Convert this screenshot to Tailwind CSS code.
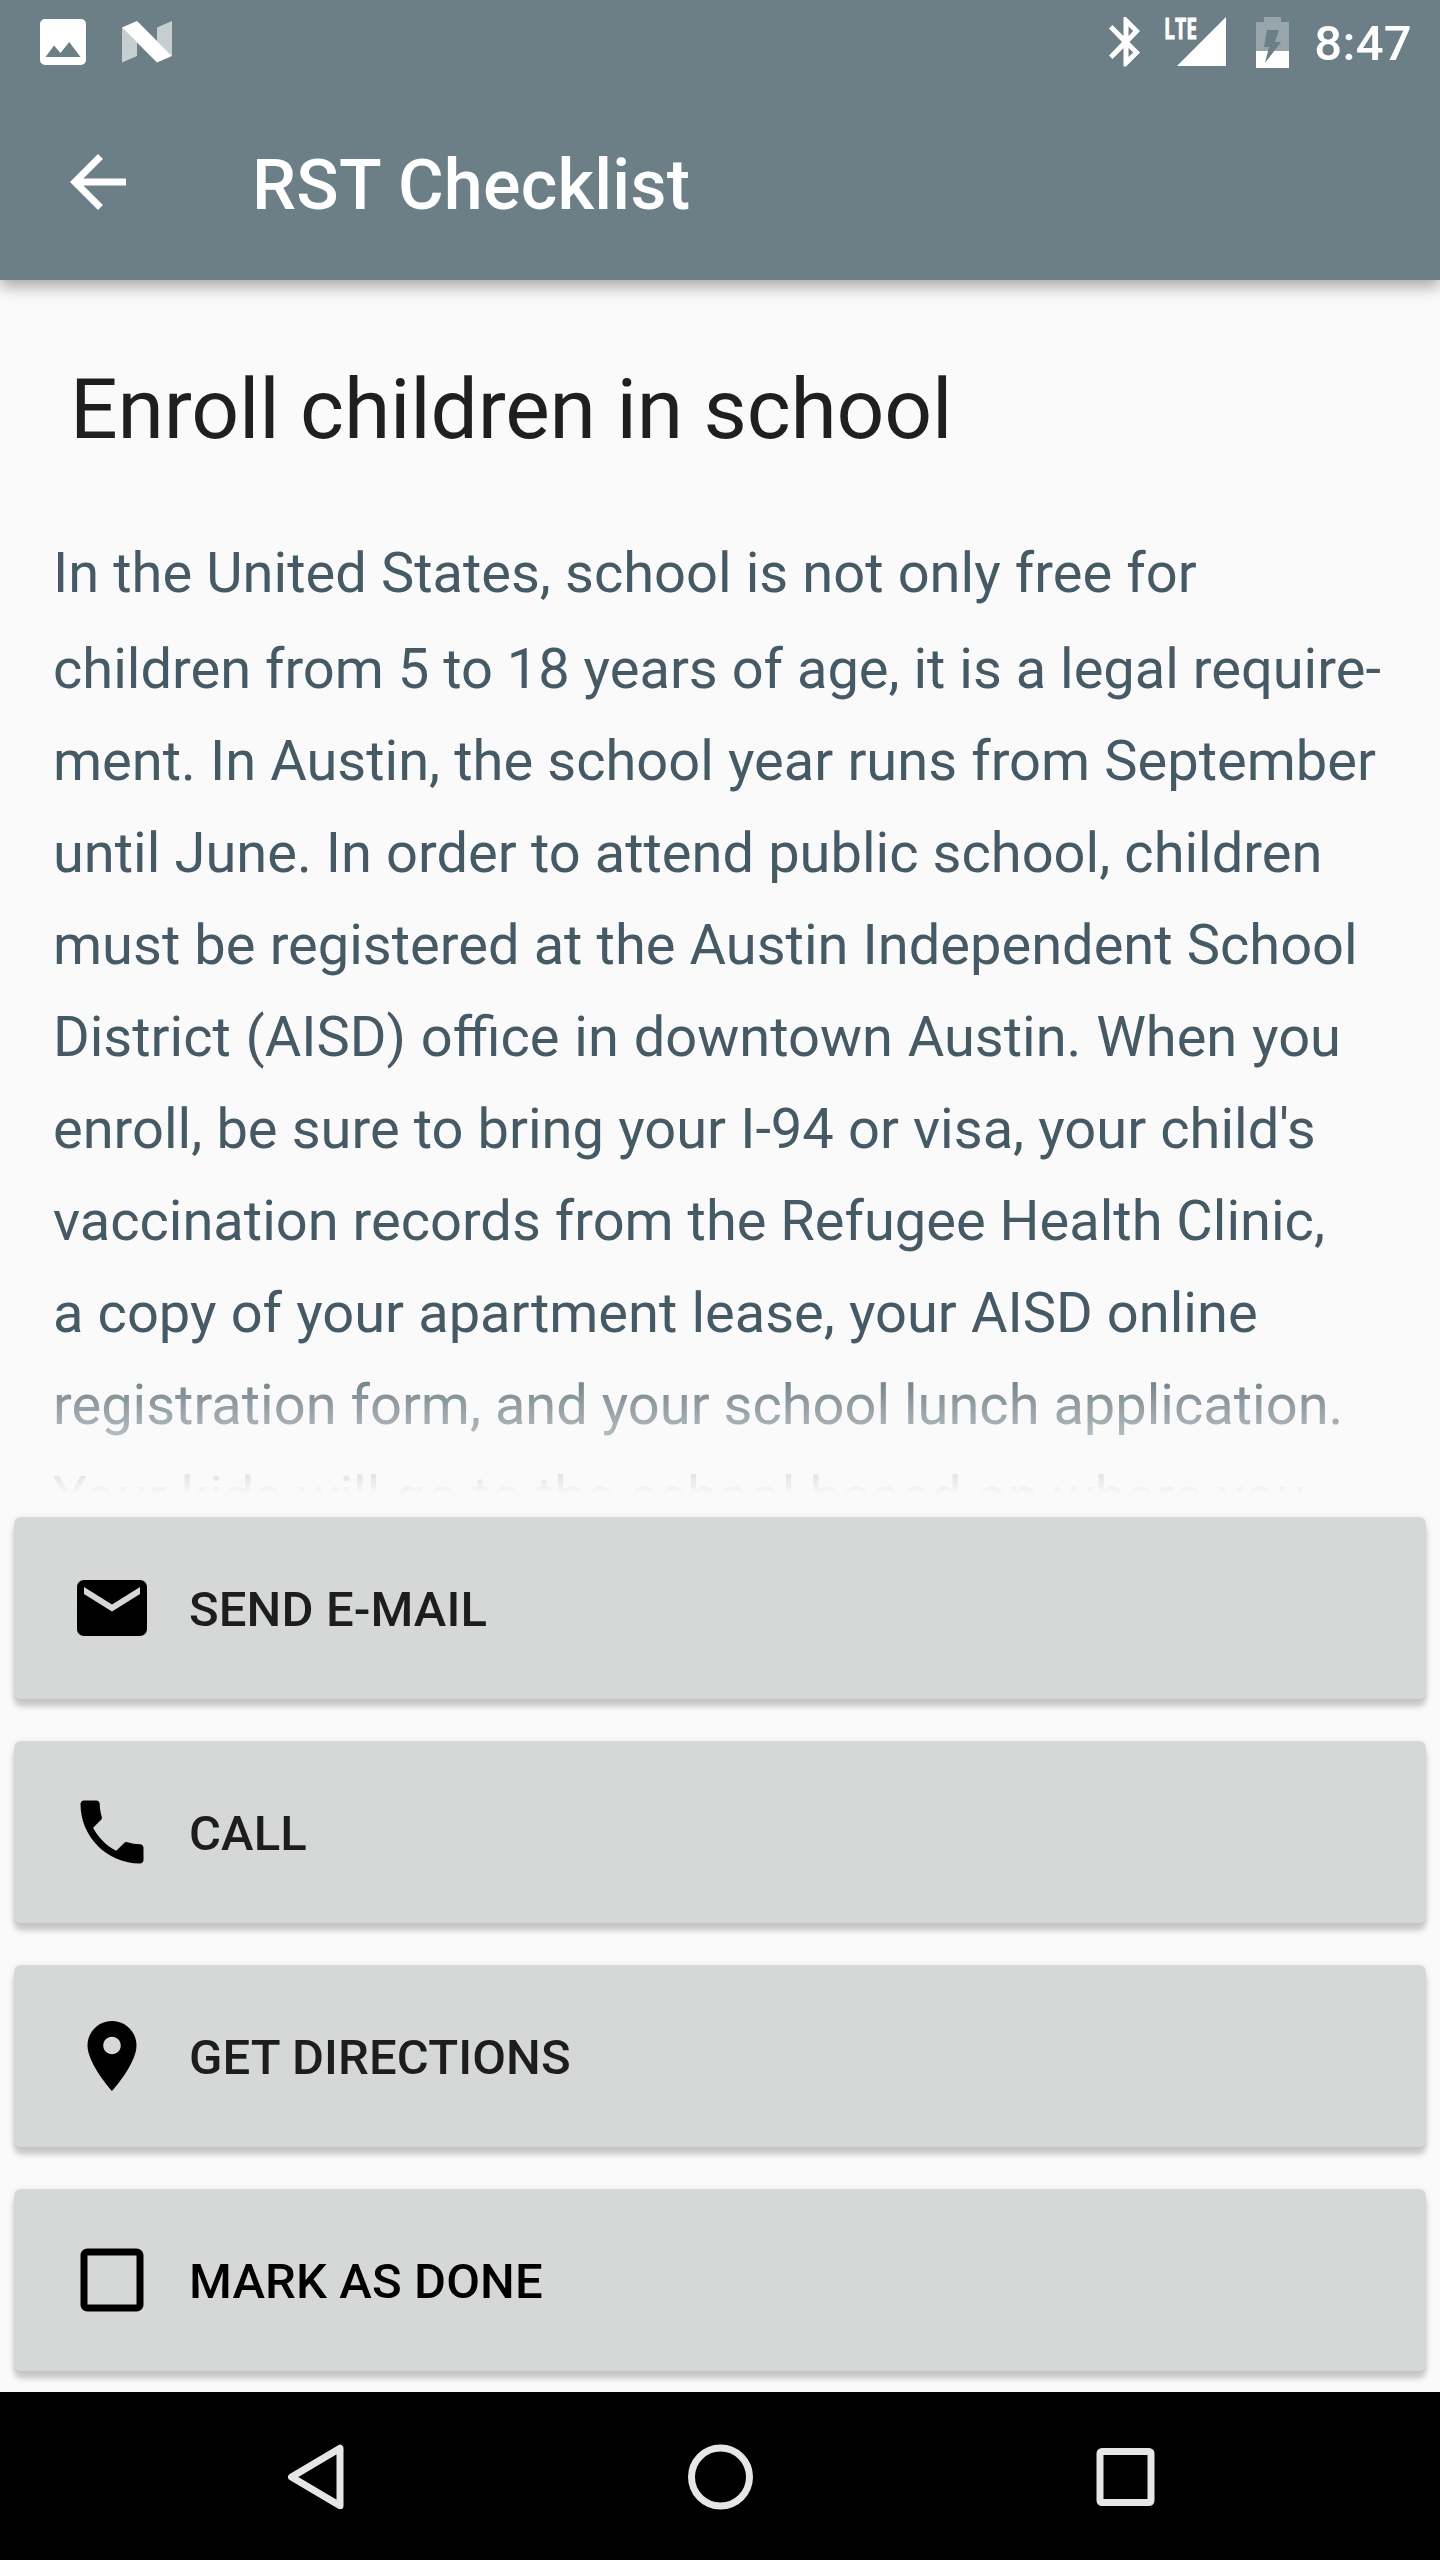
<!DOCTYPE html>
<html lang="en">
<head>
<meta charset="utf-8">
<title>RST Checklist</title>
<script src="https://cdn.jsdelivr.net/npm/@tailwindcss/browser@4"></script>
</head>
<body class="flex h-[2560px] w-[1440px] flex-col overflow-hidden bg-[#fafafa] font-[Roboto,sans-serif]">

<header class="z-10 h-[280px] shrink-0 bg-[#6c7f86] text-white shadow-[0_7px_14px_rgba(0,0,0,0.32)]">
  <div class="flex h-[84px] items-center justify-between pl-[40px] pr-[28px]">
    <div class="flex items-center gap-[36px]">
      <svg class="h-[46px] w-[46px]" viewBox="0 0 46 46" fill="currentColor"><path fill-rule="evenodd" d="M5 0h36a5 5 0 0 1 5 5v36a5 5 0 0 1-5 5H5a5 5 0 0 1-5-5V5a5 5 0 0 1 5-5ZM5.500 38H40.500L29.200 23L20.500 34L14 26.500Z"/></svg>
      <svg class="h-[42px] w-[50px]" viewBox="0 0 50 42" fill="currentColor"><path opacity=".62" d="M0 6.500L15 21.500V35L0 41.500ZM35 6.500L50 0V35L35 20Z"/><path d="M0 6.500L15 0L50 35L35 41.500Z"/></svg>
    </div>
    <div class="flex items-center">
      <svg class="mr-[25px] h-[50px] w-[31px]" viewBox="0 0 31 50" fill="currentColor"><path fill-rule="evenodd" d="M14.500 0H17L31 14L20.500 25L31 35.500L17 49.500H14.500V31L3.500 42L0 38.500L13 25L0 11.500L3.500 8L14.500 19ZM19.500 9.500V19L24.200 14ZM19.500 31V40L24.200 35.500Z"/></svg>
      <svg class="mr-[30px] h-[50px] w-[61px] overflow-visible" viewBox="0 0 61 50" fill="currentColor"><text x="-1" y="22" font-family="Open Sans" font-weight="700" font-size="29" stroke="currentColor" stroke-width=".8" textLength="33" lengthAdjust="spacingAndGlyphs">LTE</text><path d="M61 0V49H12Z"/></svg>
      <svg class="mr-[25px] h-[51px] w-[33px]" viewBox="0 0 33 51"><path fill="#fff" fill-opacity=".3" d="M8 0H25V5H33V51H0V5H8Z"/><path fill="#fff" d="M0 34H33V51H0Z"/><path fill="#6c7f86" d="M11 13H23L19 25H25L9 46L13 30H8Z"/></svg>
      <span class="mt-[2px] text-[49px] leading-[57px] font-medium tracking-[0.3px]">8:47</span>
    </div>
  </div>
  <div class="flex h-[196px] items-center pl-[56px]">
    <svg class="h-[84px] w-[84px]" viewBox="0 0 24 24" fill="currentColor"><path d="M20 11H7.830l5.590-5.590L12 4l-8 8 8 8 1.410-1.410L7.830 13H20v-2z"/></svg>
    <h1 class="ml-[112px] mt-[6px] text-[70px] leading-[82px] font-medium tracking-[0.25px]">RST Checklist</h1>
  </div>
</header>

<main class="flex h-[2112px] shrink-0 flex-col">
  <h2 class="mt-[81px] ml-[70px] text-[84px] leading-[98px] tracking-[-0.18px] text-[#1f1f1f]">Enroll children in school</h2>
  <div class="mt-[68px] h-[968px] shrink-0 overflow-hidden pl-[53px] text-[56px] leading-[92px] whitespace-nowrap text-[#455a64] [mask-image:linear-gradient(to_bottom,black_813px,transparent_968px)]">
    <p class="mb-[4px] [word-spacing:0.25px]">In the United States, school is not only free for</p>
    <p class="[word-spacing:0.25px]"><span class="[word-spacing:0px]">children from 5 to 18 years of age, it is a legal require-</span><br>ment. In Austin, the school year runs from September<br>until June. In order to attend public school, children<br>must be registered at the Austin Independent School<br><span class="[word-spacing:0.9px]">District (AISD) office in downtown Austin. When you</span><br>enroll, be sure to bring your I-94 or visa, your child's<br><span class="[word-spacing:0px]">vaccination records from the Refugee Health Clinic,</span><br>a copy of your apartment lease, your AISD online<br><span class="[word-spacing:0px]">registration form, and your school lunch application.</span><br>Your kids will go to the school based on where you</p>
  </div>
  <div class="mt-[22px] flex flex-col gap-[42px] px-[14px] text-[49px] leading-[58px] font-medium tracking-[0.12px] text-[#1d1d1d]">
    <button class="flex h-[182px] items-center rounded-[7px] bg-[#d6d8d7] pl-[56px] shadow-[0_8px_5px_rgba(0,0,0,0.17),0_1px_7px_rgba(0,0,0,0.1)]">
      <svg class="mr-[35px] h-[84px] w-[84px]" viewBox="0 0 24 24" fill="#000"><path d="M20 4H4c-1.100 0-1.990.9-1.990 2L2 18c0 1.100.9 2 2 2h16c1.100 0 2-.9 2-2V6c0-1.100-.9-2-2-2zm0 4l-8 5-8-5V6l8 5 8-5v2z"/></svg>
      <span class="mt-[4px]">SEND E-MAIL</span>
    </button>
    <button class="flex h-[182px] items-center rounded-[7px] bg-[#d6d8d7] pl-[56px] shadow-[0_8px_5px_rgba(0,0,0,0.17),0_1px_7px_rgba(0,0,0,0.1)]">
      <svg class="mr-[35px] h-[84px] w-[84px]" viewBox="0 0 24 24" fill="#000"><path d="M6.620 10.790c1.440 2.830 3.760 5.140 6.590 6.590l2.200-2.200c.27-.27.67-.36 1.020-.24 1.120.37 2.330.57 3.570.57.55 0 1 .45 1 1V20c0 .55-.45 1-1 1-9.390 0-17-7.610-17-17 0-.55.45-1 1-1h3.500c.55 0 1 .45 1 1 0 1.250.2 2.450.57 3.570.11.35.03.74-.25 1.020l-2.200 2.200z"/></svg>
      <span class="mt-[4px]">CALL</span>
    </button>
    <button class="flex h-[182px] items-center rounded-[7px] bg-[#d6d8d7] pl-[56px] shadow-[0_8px_5px_rgba(0,0,0,0.17),0_1px_7px_rgba(0,0,0,0.1)]">
      <svg class="mr-[35px] h-[84px] w-[84px]" viewBox="0 0 24 24" fill="#000"><path d="M12 2C8.130 2 5 5.130 5 9c0 5.250 7 13 7 13s7-7.750 7-13c0-3.870-3.130-7-7-7zm0 9.500c-1.380 0-2.500-1.120-2.500-2.500s1.120-2.500 2.500-2.500 2.500 1.120 2.500 2.500-1.120 2.500-2.500 2.500z"/></svg>
      <span class="mt-[4px]">GET DIRECTIONS</span>
    </button>
    <button class="flex h-[182px] items-center rounded-[7px] bg-[#d6d8d7] pl-[56px] text-black shadow-[0_8px_5px_rgba(0,0,0,0.17),0_1px_7px_rgba(0,0,0,0.1)]">
      <svg class="mr-[35px] h-[84px] w-[84px]" viewBox="0 0 24 24" fill="#000"><path d="M19 5v14H5V5h14m0-2H5c-1.100 0-2 .9-2 2v14c0 1.100.9 2 2 2h14c1.100 0 2-.9 2-2V5c0-1.100-.9-2-2-2z"/></svg>
      <span class="mt-[4px]">MARK AS DONE</span>
    </button>
  </div>
</main>

<nav class="z-10 flex h-[168px] shrink-0 items-center justify-between bg-black pt-[1px] pr-[285px] pl-[287px]">
  <svg class="h-[66px] w-[58px]" viewBox="0 0 58 66" fill="none" stroke="#e6e6e6" stroke-width="7" stroke-linejoin="round"><path d="M53 4.200V61.800L4.500 33Z"/></svg>
  <svg class="h-[66px] w-[66px]" viewBox="0 0 66 66" fill="none" stroke="#e6e6e6" stroke-width="7"><circle cx="33.500" cy="33" r="29"/></svg>
  <svg class="h-[60px] w-[60px]" viewBox="0 0 60 60" fill="none" stroke="#e6e6e6" stroke-width="7"><rect x="5" y="4.500" width="51" height="51" rx="2"/></svg>
</nav>
</body>
</html>
